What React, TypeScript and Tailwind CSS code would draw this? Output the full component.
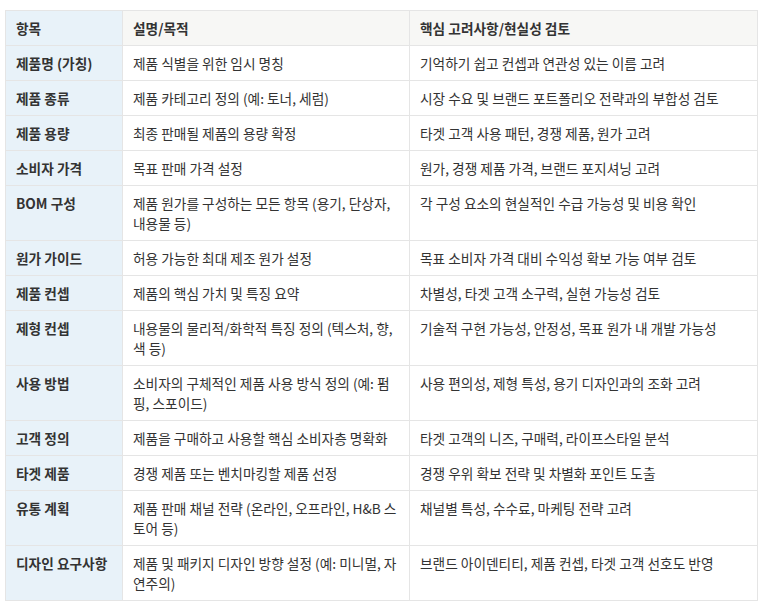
import React from "react";

const rows: [string, string, string][] = [
  ["제품명 (가칭)", "제품 식별을 위한 임시 명칭", "기억하기 쉽고 컨셉과 연관성 있는 이름 고려"],
  ["제품 종류", "제품 카테고리 정의 (예: 토너, 세럼)", "시장 수요 및 브랜드 포트폴리오 전략과의 부합성 검토"],
  ["제품 용량", "최종 판매될 제품의 용량 확정", "타겟 고객 사용 패턴, 경쟁 제품, 원가 고려"],
  ["소비자 가격", "목표 판매 가격 설정", "원가, 경쟁 제품 가격, 브랜드 포지셔닝 고려"],
  ["BOM 구성", "제품 원가를 구성하는 모든 항목 (용기, 단상자, 내용물 등)", "각 구성 요소의 현실적인 수급 가능성 및 비용 확인"],
  ["원가 가이드", "허용 가능한 최대 제조 원가 설정", "목표 소비자 가격 대비 수익성 확보 가능 여부 검토"],
  ["제품 컨셉", "제품의 핵심 가치 및 특징 요약", "차별성, 타겟 고객 소구력, 실현 가능성 검토"],
  ["제형 컨셉", "내용물의 물리적/화학적 특징 정의 (텍스처, 향, 색 등)", "기술적 구현 가능성, 안정성, 목표 원가 내 개발 가능성"],
  ["사용 방법", "소비자의 구체적인 제품 사용 방식 정의 (예: 펌핑, 스포이드)", "사용 편의성, 제형 특성, 용기 디자인과의 조화 고려"],
  ["고객 정의", "제품을 구매하고 사용할 핵심 소비자층 명확화", "타겟 고객의 니즈, 구매력, 라이프스타일 분석"],
  ["타겟 제품", "경쟁 제품 또는 벤치마킹할 제품 선정", "경쟁 우위 확보 전략 및 차별화 포인트 도출"],
  ["유통 계획", "제품 판매 채널 전략 (온라인, 오프라인, H&B 스토어 등)", "채널별 특성, 수수료, 마케팅 전략 고려"],
  ["디자인 요구사항", "제품 및 패키지 디자인 방향 설정 (예: 미니멀, 자연주의)", "브랜드 아이덴티티, 제품 컨셉, 타겟 고객 선호도 반영"],
];

export default function App() {
  return (
    <div
      className="bg-white pl-[5px] pt-[10px] text-[#333333]"
      style={{ fontFamily: '"Noto Sans CJK KR", "Noto Sans", sans-serif' }}
    >
      <table className="w-[752px] table-fixed border-collapse text-[13.7px] leading-[20px]">
        <colgroup>
          <col className="w-[117px]" />
          <col className="w-[287px]" />
          <col className="w-[348px]" />
        </colgroup>
        <thead>
          <tr>
            <th className="border border-[#e5e5e5] bg-[#e8f2f9] px-[10px] py-[7px] text-left align-top font-bold">항목</th>
            <th className="border border-[#e5e5e5] bg-[#f7f7f5] px-[10px] py-[7px] text-left align-top font-bold">설명/목적</th>
            <th className="border border-[#e5e5e5] bg-[#f7f7f5] px-[10px] py-[7px] text-left align-top font-bold">핵심 고려사항/현실성 검토</th>
          </tr>
        </thead>
        <tbody>
          {rows.map((r) => (
            <tr key={r[0]}>
              <td className="border border-[#e5e5e5] bg-[#e8f2f9] px-[10px] py-[7px] align-top font-semibold">{r[0]}</td>
              <td className="border border-[#e5e5e5] bg-white px-[10px] py-[7px] align-top">{r[1]}</td>
              <td className="border border-[#e5e5e5] bg-white px-[10px] py-[7px] align-top">{r[2]}</td>
            </tr>
          ))}
        </tbody>
      </table>
    </div>
  );
}
